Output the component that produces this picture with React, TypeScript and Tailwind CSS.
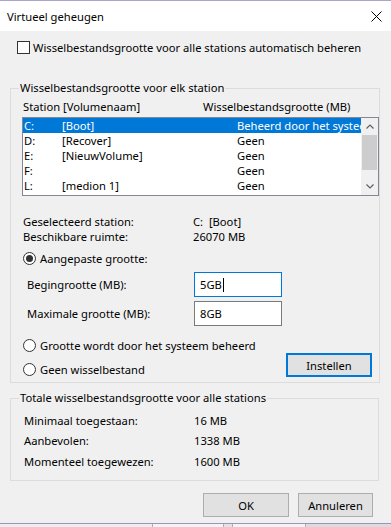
import React from "react";

const rows: [string, string, string][] = [
  ["C:", "[Boot]", "Beheerd door het systeem"],
  ["D:", "[Recover]", "Geen"],
  ["E:", "[NieuwVolume]", "Geen"],
  ["F:", "", "Geen"],
  ["L:", "[medion 1]", "Geen"],
];

function Radio({ checked }: { checked?: boolean }) {
  return (
    <span className="flex h-[13px] w-[13px] shrink-0 items-center justify-center rounded-full border border-[#333333] bg-white">
      {checked ? <span className="h-[7px] w-[7px] rounded-full bg-[#333333]" /> : null}
    </span>
  );
}

function Chevron({ up }: { up?: boolean }) {
  return (
    <svg width="8" height="5" viewBox="0 0 8 5">
      <path
        d={up ? "M0.5 4.5 L4 1 L7.5 4.5" : "M0.5 0.5 L4 4 L7.5 0.5"}
        fill="none"
        stroke="#606060"
        strokeWidth="1.2"
      />
    </svg>
  );
}

export default function App() {
  return (
    <div className="flex h-[527px] w-[391px] flex-col overflow-hidden bg-[#f0f0f0] font-['Noto_Sans',sans-serif] text-[11.2px] leading-[15px] text-black">
      <div className="h-px bg-[#a9a6c9]" />
      <div className="flex h-[30px] items-center justify-between bg-white pl-[7px] pr-[9px]">
        <span>Virtueel geheugen</span>
        <svg width="11" height="11" viewBox="0 0 11 11">
          <path d="M0.5 0.5 L10.5 10.5 M10.5 0.5 L0.5 10.5" stroke="#000" strokeWidth="1" />
        </svg>
      </div>

      <div className="mt-[9px] flex h-[15px] items-center pl-[17px]">
        <span className="h-[13px] w-[13px] shrink-0 border border-[#333333] bg-white" />
        <span className="ml-[3px] whitespace-nowrap">
          Wisselbestandsgrootte voor alle stations automatisch beheren
        </span>
      </div>

      <fieldset className="ml-[10px] mt-[25px] w-[369px] border border-[#dcdcdc]">
        <legend className="ml-[8px] px-[1px] leading-[16px]">Wisselbestandsgrootte voor elk station</legend>
        <div className="pb-[5px]">
          <div className="mt-[3px] flex h-[15px] items-center">
            <span className="ml-[12px] w-[180px] whitespace-nowrap">Station [Volumenaam]</span>
            <span className="whitespace-nowrap">Wisselbestandsgrootte (MB)</span>
          </div>

          <div className="ml-[11px] mt-[3px] flex h-[79px] w-[357px] border border-[#828790] bg-white">
            <div className="min-w-0 flex-1 overflow-hidden">
              {rows.map((r, i) => (
                <div
                  key={r[0]}
                  className={
                    i === 0
                      ? "flex h-[15px] items-center whitespace-nowrap bg-[#0078d7] pl-[1px] text-white"
                      : "flex h-[15px] items-center whitespace-nowrap pl-[1px]"
                  }
                >
                  <span className="w-[38px] shrink-0">{r[0]}</span>
                  <span className="w-[175px] shrink-0">{r[1]}</span>
                  <span className="shrink-0">{r[2]}</span>
                </div>
              ))}
            </div>
            <div className="flex w-[17px] shrink-0 flex-col bg-[#f0f0f0]">
              <div className="flex h-[17px] items-center justify-center">
                <Chevron up />
              </div>
              <div className="mx-[1px] h-[35px] bg-[#cdcdcd]" />
              <div className="flex-1" />
              <div className="flex h-[17px] items-center justify-center">
                <Chevron />
              </div>
            </div>
          </div>

          <div className="mt-[18px] flex h-[15px] items-center">
            <span className="ml-[12px] w-[170px]">Geselecteerd station:</span>
            <span className="whitespace-pre">C:  [Boot]</span>
          </div>
          <div className="flex h-[15px] items-center">
            <span className="ml-[12px] w-[170px]">Beschikbare ruimte:</span>
            <span>26070 MB</span>
          </div>

          <div className="ml-[12px] mt-[7px] flex h-[15px] items-center">
            <Radio checked />
            <span className="ml-[4px]">Aangepaste grootte:</span>
          </div>

          <div className="mt-[6px] flex h-[25px] items-center">
            <span className="ml-[16px] w-[167px]">Begingrootte (MB):</span>
            <div className="flex h-[25px] w-[88px] items-center border border-[#0078d7] bg-white pl-[5px]">
              <span>5GB</span>
              <span className="ml-px h-[14px] w-px bg-black" />
            </div>
          </div>
          <div className="mt-[4px] flex h-[25px] items-center">
            <span className="ml-[16px] w-[167px]">Maximale grootte (MB):</span>
            <div className="flex h-[25px] w-[88px] items-center border border-[#7a7a7a] bg-white pl-[5px]">
              <span>8GB</span>
            </div>
          </div>

          <div className="mt-[12px] flex items-end justify-between">
            <div className="ml-[12px] flex flex-col gap-[9px]">
              <div className="flex h-[15px] items-center">
                <Radio />
                <span className="ml-[4px] whitespace-nowrap">Grootte wordt door het systeem beheerd</span>
              </div>
              <div className="flex h-[15px] items-center">
                <Radio />
                <span className="ml-[4px]">Geen wisselbestand</span>
              </div>
            </div>
            <button className="mr-[7px] flex h-[24px] w-[86px] items-center justify-center border-2 border-[#0078d7] bg-[#e1e1e1]">
              Instellen
            </button>
          </div>
        </div>
      </fieldset>

      <fieldset className="ml-[10px] mt-[7px] w-[369px] border border-[#dcdcdc]">
        <legend className="ml-[8px] px-[1px] leading-[16px]">Totale wisselbestandsgrootte voor alle stations</legend>
        <div className="pb-[11px]">
          <div className="mt-[7px] flex h-[15px] items-center">
            <span className="ml-[13px] w-[170px]">Minimaal toegestaan:</span>
            <span>16 MB</span>
          </div>
          <div className="mt-[5px] flex h-[15px] items-center">
            <span className="ml-[13px] w-[170px]">Aanbevolen:</span>
            <span>1338 MB</span>
          </div>
          <div className="mt-[6px] flex h-[15px] items-center">
            <span className="ml-[13px] w-[170px]">Momenteel toegewezen:</span>
            <span>1600 MB</span>
          </div>
        </div>
      </fieldset>

      <div className="mt-[12px] flex justify-end gap-[9px] pr-[18px]">
        <button className="flex h-[24px] w-[86px] items-center justify-center border border-[#adadad] bg-[#e1e1e1]">
          OK
        </button>
        <button className="flex h-[24px] w-[75px] items-center justify-center border border-[#adadad] bg-[#e1e1e1]">
          Annuleren
        </button>
      </div>

      <div className="mt-[6px] h-px bg-[#9894c4]" />
      <div className="flex h-[3px]">
        <div className="w-[152px] bg-[#eeeeee]" />
        <div className="w-px bg-[#b0b0b0]" />
        <div className="w-[70px] bg-[#f4f4f4]" />
        <div className="w-px bg-[#b0b0b0]" />
        <div className="w-[8px] bg-[#e4e4e4]" />
        <div className="w-px bg-[#b0b0b0]" />
        <div className="w-[72px] bg-[#f4f4f4]" />
        <div className="w-px bg-[#b0b0b0]" />
        <div className="flex-1 bg-[#dcdcdc]" />
      </div>
    </div>
  );
}
